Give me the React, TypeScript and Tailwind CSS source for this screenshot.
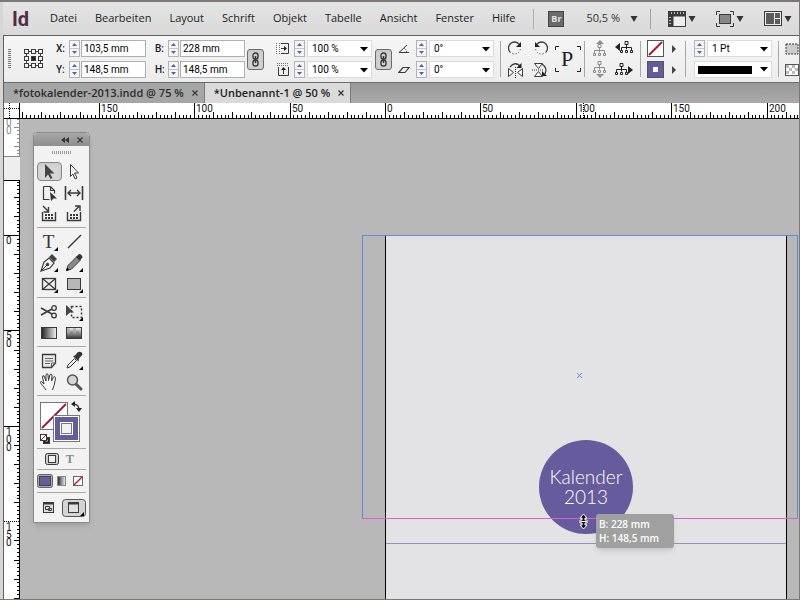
import { useEffect, useState, type ReactNode } from "react";
import clsx from "clsx";

const MENUS = [
  "Datei",
  "Bearbeiten",
  "Layout",
  "Schrift",
  "Objekt",
  "Tabelle",
  "Ansicht",
  "Fenster",
  "Hilfe",
];

const PX_PER_MM = 1.909;

// small shared pieces
function Icon({
  w,
  h,
  children,
}: {
  w: number;
  h: number;
  children: ReactNode;
}) {
  return (
    <svg
      width={w}
      height={h}
      viewBox={`0 0 ${w} ${h}`}
      fill="none"
      stroke="#3a3a3a"
      className="block shrink-0"
      aria-hidden="true"
    >
      {children}
    </svg>
  );
}

function Caret({ flat, className }: { flat?: boolean; className?: string }) {
  return (
    <svg
      width="8"
      height="6"
      viewBox="0 0 8 6"
      className={clsx("block shrink-0", className)}
      aria-hidden="true"
    >
      <path d={flat ? "M0 0h8L4 4.500z" : "M.5 0h7L4 6z"} fill="currentColor" />
    </svg>
  );
}

function Separator() {
  return <div className="h-9 w-px shrink-0 bg-[#a8a8a8]" />;
}

function Stepper({ label }: { label: string }) {
  return (
    <div className="flex h-[17px] w-[11px] shrink-0 flex-col border border-[#b4b4b4] bg-[#f6f6f6]">
      <button
        aria-label={`${label} erhöhen`}
        className="flex flex-1 items-center justify-center border-b border-[#c4c4c4]"
      >
        <Icon w={5} h={3}>
          <path d="M0 3L2.500 0L5 3z" fill="#5460ac" stroke="none" />
        </Icon>
      </button>
      <button
        aria-label={`${label} verringern`}
        className="flex flex-1 items-center justify-center"
      >
        <Icon w={5} h={3}>
          <path d="M0 0L2.500 3L5 0z" fill="#5460ac" stroke="none" />
        </Icon>
      </button>
    </div>
  );
}

function Field({ label, value }: { label: string; value: string }) {
  return (
    <div className="flex h-[17px] items-center">
      <label htmlFor={`field-${label}`} className="w-[13px] font-medium">
        {label}:
      </label>
      <Stepper label={label} />
      <input
        id={`field-${label}`}
        defaultValue={value}
        className="ml-px h-[17px] w-[65px] border border-[#b0b0b0] bg-white px-0.5 text-black"
      />
    </div>
  );
}

function ValueSelect({ label, value }: { label: string; value: string }) {
  return (
    <div className="relative h-[17px] w-[65px]">
      <select
        aria-label={label}
        className="h-[17px] w-full appearance-none border border-[#dcdcdc] bg-white px-1 text-black"
      >
        <option>{value}</option>
      </select>
      <Caret
        flat
        className="pointer-events-none absolute right-1 top-[7px] text-black"
      />
    </div>
  );
}

function SelectRow({
  icon,
  label,
  value,
}: {
  icon?: ReactNode;
  label: string;
  value: string;
}) {
  return (
    <div className="flex h-[17px] items-center">
      {icon && <div className="w-[18px]">{icon}</div>}
      <Stepper label={label} />
      <div className="w-0.5" />
      <ValueSelect label={label} value={value} />
    </div>
  );
}

function ChainButton({ label }: { label: string }) {
  return (
    <button
      aria-label={label}
      aria-pressed="true"
      className="flex h-[21px] w-[17px] shrink-0 items-center justify-center rounded-[3px] border border-[#6c6c6c] bg-[#d2d2d2] shadow-inner"
    >
      <Icon w={9} h={15}>
        <rect x="2" y="1" width="5" height="6" rx="2.2" strokeWidth="1.4" />
        <rect x="2" y="8" width="5" height="6" rx="2.2" strokeWidth="1.4" />
        <path d="M4.500 4v7" strokeWidth="1.6" />
      </Icon>
    </button>
  );
}

// menu bar
function MenuBar() {
  return (
    <header className="flex h-[34px] shrink-0 items-center overflow-hidden border-b border-[#606060] bg-linear-to-b from-[#e4e4e4] to-[#d9d9d9] pl-[9px] text-[11px] text-[#1c1c1c]">
      <div className="w-[38px] shrink-0 font-[Roboto,sans-serif] text-xl font-bold text-[#4f2d45]">
        Id
      </div>
      <nav className="flex shrink-0 gap-[18px]">
        {MENUS.map((menu) => (
          <button key={menu}>{menu}</button>
        ))}
      </nav>
      <div className="ml-[18px] h-5 w-px shrink-0 bg-[#b0b0b0]" />
      <button
        aria-label="Bridge"
        className="ml-3.5 flex h-4 w-4 shrink-0 items-center justify-center border border-[#444] bg-[#6a6a6a] text-[9px] font-bold text-[#e4e4e4]"
      >
        Br
      </button>
      <button className="ml-[22px] flex shrink-0 items-center gap-2.5 text-[#333]">
        50,5 % <Caret />
      </button>
      <div className="ml-3 h-5 w-px shrink-0 bg-[#a0a0a0]" />
      <div className="ml-[17px] flex shrink-0 gap-5 text-[#333]">
        <button
          aria-label="Anzeigeoptionen"
          className="flex items-center gap-0.5"
        >
          <Icon w={18} h={16}>
            <path d="M0 0h18v5H5v11H0z" fill="#3a3a3a" stroke="none" />
            <path d="M5 5h12.500v10.500H5z" fill="#eee" />
            <path
              d="M3.500 1v2M6.500 1v2M9.500 1v2M12.500 1v2M15.500 1v2M1 6.500h2M1 9.500h2M1 12.500h2"
              stroke="#bbb"
            />
          </Icon>
          <Caret />
        </button>
        <button
          aria-label="Bildschirmmodus"
          className="flex items-center gap-0.5"
        >
          <Icon w={18} h={16}>
            <path d="M.5 4V.5H4M14 .5h3.500V4M17.500 12v3.500H14M4 15.500H.5V12" />
            <rect x="3.500" y="3.500" width="11" height="9" fill="#888" />
          </Icon>
          <Caret />
        </button>
        <button
          aria-label="Dokumente anordnen"
          className="flex items-center gap-0.5"
        >
          <Icon w={18} h={15}>
            <rect x=".5" y=".5" width="17" height="14" fill="#eee" />
            <path
              d="M2 2h8v11H2zM11 2h5v5h-5zM11 8h5v5h-5z"
              fill="#5c5c5c"
              stroke="none"
            />
          </Icon>
          <Caret />
        </button>
      </div>
    </header>
  );
}

function ReferencePoint() {
  const cells = [0, 7, 14];
  return (
    <Icon w={20} h={20}>
      <path d="M2.500 2.500h14v14h-14z" />
      {cells.map((y) =>
        cells.map((x) => (
          <rect
            key={`${x}-${y}`}
            x={x + 0.5}
            y={y + 0.5}
            width="4"
            height="4"
            fill={x === 7 && y === 7 ? "#222" : "#f4f4f4"}
          />
        ))
      )}
    </Icon>
  );
}

// hierarchy glyph used by the select container / content buttons
function TreeIcon({
  arrow,
  muted,
}: {
  arrow: "up" | "down" | "left" | "right";
  muted?: boolean;
}) {
  const color = muted ? "#8e8e8e" : "#222";
  const arrows = {
    up: "M5 4L9 0l4 4z",
    down: "M5 13l4 4l4-4z",
    left: "M5 3v8L0 7z",
    right: "M13 5v8l5-4z",
  };
  const shift = { up: [2, 4], down: [2, 0], left: [5, 1], right: [0, 2] }[arrow];
  return (
    <Icon w={18} h={17}>
      <path d={arrows[arrow]} fill={color} stroke="none" />
      <g transform={`translate(${shift[0]} ${shift[1]})`} stroke={color}>
        <path d="M6.500 3.500v5M1.500 9V6.500h10V9" />
        <path d="M5 .5h3v3H5zM.5 9.500h2v2h-2zM5.500 9.500h2v2h-2zM10.500 9.500h2v2h-2z" />
      </g>
    </Icon>
  );
}

function IconButton({
  label,
  children,
}: {
  label: string;
  children: ReactNode;
}) {
  return (
    <button
      aria-label={label}
      className="flex h-[17px] items-center justify-center"
    >
      {children}
    </button>
  );
}

// control bar under the menus
function ControlBar() {
  const column = "flex shrink-0 flex-col gap-1";
  return (
    <section
      aria-label="Steuerung"
      className="flex h-[47px] shrink-0 items-center overflow-hidden border-b border-[#6c6c6c] bg-linear-to-b from-[#f6f6f6] to-[#ececec] pl-1 font-[Roboto,sans-serif] text-[10px] text-[#1c1c1c]"
    >
      <Icon w={4} h={20}>
        <path d="M1.500 0v20" stroke="#777" strokeWidth="3" strokeDasharray="1 1" />
      </Icon>
      <div className="ml-3 w-8 shrink-0">
        <ReferencePoint />
      </div>
      <div className={column}>
        <Field label="X" value="103,5 mm" />
        <Field label="Y" value="148,5 mm" />
      </div>
      <div className={clsx(column, "ml-[9px]")}>
        <Field label="B" value="228 mm" />
        <Field label="H" value="148,5 mm" />
      </div>
      <div className="w-0.5 shrink-0" />
      <ChainButton label="Proportionen beibehalten" />
      <div className={clsx(column, "ml-3")}>
        <SelectRow
          label="X-Skalierung"
          value="100 %"
          icon={
            <Icon w={14} h={13}>
              <path d="M.5 1v12M3.500 1v12" stroke="#777" strokeDasharray="1 1" />
              <path d="M5 1.500h7.500v10H5" />
              <path d="M5 6.500h4" />
              <path d="M8 4l3 2.500L8 9z" fill="#222" stroke="none" />
            </Icon>
          }
        />
        <SelectRow
          label="Y-Skalierung"
          value="100 %"
          icon={
            <Icon w={14} h={13}>
              <path d="M1 .5h12M1 2.500h12" stroke="#777" strokeDasharray="1 1" />
              <path d="M2.500 4v8.500h10V4" />
              <path d="M7.500 6v5" />
              <path d="M5 7l2.500-3L10 7z" fill="#222" stroke="none" />
            </Icon>
          }
        />
      </div>
      <div className="w-[3px] shrink-0" />
      <ChainButton label="Skalierung verketten" />
      <div className={clsx(column, "ml-1.5")}>
        <SelectRow
          label="Drehwinkel"
          value="0°"
          icon={
            <Icon w={12} h={10}>
              <path d="M9 1L1 8.500h10" />
              <path d="M6 4q2.500 1.500 2.500 4" strokeDasharray="1 1" />
            </Icon>
          }
        />
        <SelectRow
          label="Scherwinkel"
          value="0°"
          icon={
            <Icon w={12} h={8}>
              <path d="M.8 6.500L5 1.500h6L7 6.500z" strokeWidth="1.200" />
            </Icon>
          }
        />
      </div>
      <div className="w-1.5 shrink-0" />
      <Separator />
      <div className={clsx(column, "ml-1.5")}>
        <IconButton label="Um 90° drehen">
          <Icon w={17} h={16}>
            <path d="M3 11A6 6 0 0 1 12 3" strokeWidth="1.300" />
            <path d="M3 11A6 6 0 1 0 12 3" strokeDasharray="1 2" />
            <path d="M14 1v5H9z" fill="#222" stroke="none" />
          </Icon>
        </IconButton>
        <IconButton label="Horizontal spiegeln">
          <Icon w={17} h={16}>
            <path d="M1.500 6.500v8l5-4zM15.500 6.500v8l-5-4z" fill="#fff" />
            <path d="M8.500 5v11" strokeDasharray="1 1" />
            <path d="M3 5Q8-1 13 4" strokeWidth="1.300" />
            <path d="M14.500 1v5h-5z" fill="#222" stroke="none" />
          </Icon>
        </IconButton>
      </div>
      <div className={clsx(column, "ml-2")}>
        <IconButton label="Um 90° gegen den Uhrzeigersinn drehen">
          <Icon w={17} h={16}>
            <path d="M14 11A6 6 0 0 0 5 3" strokeWidth="1.300" />
            <path d="M14 11A6 6 0 1 1 5 3" strokeDasharray="1 2" />
            <path d="M3 1v5h5z" fill="#222" stroke="none" />
          </Icon>
        </IconButton>
        <IconButton label="Vertikal spiegeln">
          <Icon w={17} h={16}>
            <path d="M2.500 1.500h8l-4 5zM2.500 14.500h8l-4-5z" fill="#fff" />
            <path d="M0 8h12" strokeDasharray="1 1" />
            <path d="M10 2q6 4 3 10" strokeWidth="1.300" />
            <path d="M10 9v5h5z" fill="#222" stroke="none" />
          </Icon>
        </IconButton>
      </div>
      <div className="ml-1.5 flex h-[26px] w-[26px] shrink-0 items-center justify-center">
        <svg
          width="26"
          height="26"
          viewBox="0 0 26 26"
          fill="none"
          stroke="#222"
          role="img"
          aria-label="Zeichenformat"
        >
          <path d="M.5 4V.5H4M22 .5h3.500V4M25.500 22v3.500H22M4 25.500H.5V22" />
          <text
            x="12"
            y="20"
            textAnchor="middle"
            fontFamily="Liberation Serif, serif"
            fontSize="22"
            fill="#222"
            stroke="none"
          >
            P
          </text>
        </svg>
      </div>
      <div className="w-[3px] shrink-0" />
      <Separator />
      <div className={clsx(column, "ml-1.5")}>
        <IconButton label="Container auswählen">
          <TreeIcon arrow="up" muted />
        </IconButton>
        <IconButton label="Inhalt auswählen">
          <TreeIcon arrow="down" muted />
        </IconButton>
      </div>
      <div className={clsx(column, "ml-1.5")}>
        <IconButton label="Vorheriges Objekt">
          <TreeIcon arrow="left" />
        </IconButton>
        <IconButton label="Nächstes Objekt">
          <TreeIcon arrow="right" />
        </IconButton>
      </div>
      <div className="w-[7px] shrink-0" />
      <Separator />
      <div className={clsx(column, "ml-1.5")}>
        <IconButton label="Fläche">
          <Icon w={17} h={17}>
            <rect x=".5" y=".5" width="16" height="16" fill="#fff" stroke="#555" />
            <path d="M2 15L15 2" stroke="#a8163c" strokeWidth="2" />
          </Icon>
        </IconButton>
        <IconButton label="Kontur">
          <Icon w={17} h={17}>
            <rect x=".5" y=".5" width="16" height="16" fill="#665b9c" stroke="#555" />
            <rect x="6" y="6" width="5" height="5" fill="#fff" stroke="none" />
          </Icon>
        </IconButton>
      </div>
      <div className={clsx(column, "ml-2")}>
        {["Flächenfarbe", "Konturfarbe"].map((label) => (
          <IconButton key={label} label={label}>
            <Icon w={5} h={8}>
              <path d="M0 0v8l4-4z" fill="#444" stroke="none" />
            </Icon>
          </IconButton>
        ))}
      </div>
      <div className="w-2 shrink-0" />
      <Separator />
      <div className={clsx(column, "ml-2")}>
        <SelectRow label="Konturstärke" value="1 Pt" />
        <button
          aria-label="Konturart"
          className="flex h-[17px] w-full items-center justify-between border border-[#dcdcdc] bg-white px-[3px] text-black"
        >
          <span className="h-2 w-[54px] bg-black" />
          <Caret flat />
        </button>
      </div>
      <div className="w-1.5 shrink-0" />
      <Separator />
      <div className={clsx(column, "ml-1.5")}>
        <IconButton label="Eckenoptionen">
          <Icon w={14} h={12}>
            <rect
              x="1"
              y="1"
              width="12"
              height="10"
              fill="#ccc"
              strokeDasharray="2 1"
            />
          </Icon>
        </IconButton>
        <IconButton label="Deckkraft">
          <Icon w={14} h={12}>
            <rect x=".5" y=".5" width="13" height="11" fill="#fff" stroke="#555" />
            <path
              d="M1 1h3v3H1zM7 1h3v3H7zM4 4h3v3H4zM10 4h3v3h-3zM1 7h3v3H1zM7 7h3v3H7z"
              fill="#bbb"
              stroke="none"
            />
          </Icon>
        </IconButton>
      </div>
    </section>
  );
}

function DocumentTab({ title, active }: { title: string; active?: boolean }) {
  return (
    <div
      className={clsx(
        "flex shrink-0 items-center gap-2 border-r border-[#7c7c7c] pl-[9px] pr-1.5 font-semibold",
        active ? "bg-[#dadada] text-[#222]" : "bg-[#a6a6a6] text-[#2c2c2c]"
      )}
    >
      <button role="tab" aria-selected={!!active}>
        {title}
      </button>
      <button aria-label={`${title} schließen`}>
        <Icon w={6} h={6}>
          <path d="M.5 .5l5 5M5.500 .5l-5 5" strokeWidth="1.300" />
        </Icon>
      </button>
    </div>
  );
}

function useWindowSize() {
  const [size, setSize] = useState({
    width: window.innerWidth,
    height: window.innerHeight,
  });
  useEffect(() => {
    const update = () =>
      setSize({ width: window.innerWidth, height: window.innerHeight });
    window.addEventListener("resize", update);
    return () => window.removeEventListener("resize", update);
  }, []);
  return size;
}

// one tick every 2 mm, a longer one every 10 mm and a full one every 50 mm
function ticks(from: number, length: number, origin: number) {
  const result: { mm: number; pos: number }[] = [];
  for (let mm = from; origin + mm * PX_PER_MM < length; mm += 2) {
    result.push({ mm, pos: Math.round(origin + mm * PX_PER_MM) });
  }
  return result;
}

function HorizontalRuler() {
  const length = useWindowSize().width - 21;
  return (
    <svg
      height="16"
      className="block w-0 flex-1 bg-white"
      fontFamily="Roboto, sans-serif"
      fontSize="10"
    >
      <g fill="#000" shapeRendering="crispEdges">
        {ticks(-190, length, 365).map(({ mm, pos }) => {
          const h = mm % 50 === 0 ? 15 : mm % 10 === 0 ? 6 : 3;
          return <rect key={mm} x={pos} y={15 - h} width="1" height={h} />;
        })}
        <rect x="0" y="15" width="100%" height="1" />
      </g>
      <path d="M563.500 0v15" stroke="#000" strokeDasharray="1 1" />
      {ticks(-150, length - 20, 365)
        .filter(({ mm }) => mm % 50 === 0)
        .map(({ mm, pos }) => (
          <text key={mm} x={pos + 2} y="9" fill="#111">
            {Math.abs(mm)}
          </text>
        ))}
    </svg>
  );
}

// digits of a vertical label are stacked
function StackedLabel({
  text,
  y,
  fill,
}: {
  text: string;
  y: number;
  fill: string;
}) {
  return (
    <text y={y} fill={fill}>
      {text.split("").map((digit, i) => (
        <tspan key={i} x="2" dy={i === 0 ? 0 : 8}>
          {digit}
        </tspan>
      ))}
    </text>
  );
}

function VerticalRuler() {
  const length = useWindowSize().height - 120;
  return (
    <svg
      width="16"
      className="block shrink-0 self-stretch bg-white"
      fontFamily="Roboto, sans-serif"
      fontSize="10"
    >
      <g fill="#888" shapeRendering="crispEdges">
        {ticks(0, 36, 0).map(({ mm, pos }) => (
          <rect
            key={mm}
            x={mm === 4 || mm === 14 ? 10 : 13}
            y={pos}
            width={mm === 4 || mm === 14 ? 5 : 2}
            height="1"
          />
        ))}
        <rect x="15" y="0" width="1" height="37" />
        <rect x="0" y="37" width="16" height="25" fill="#eee" />
        <rect x="0" y="37" width="16" height="1" />
      </g>
      <StackedLabel text="00" y={7} fill="#888" />
      <g fill="#000" shapeRendering="crispEdges">
        <rect x="0" y="61" width="16" height="1" />
        <rect x="15" y="61" width="1" height="100%" />
        {ticks(-28, length, 116).map(({ mm, pos }) => {
          const w = mm % 50 === 0 ? 15 : mm % 10 === 0 ? 5 : 2;
          return mm === 150 ? null : (
            <rect key={mm} x={15 - w} y={pos} width={w} height="1" />
          );
        })}
      </g>
      <path d="M0 402.500h15" stroke="#000" strokeDasharray="1 1" />
      {ticks(0, length - 28, 116)
        .filter(({ mm }) => mm % 50 === 0)
        .map(({ mm, pos }) => (
          <StackedLabel key={mm} text={String(mm)} y={pos + 9} fill="#111" />
        ))}
    </svg>
  );
}

// toolbox
const corner = <path d="M19 15v4h-4z" fill="#000" stroke="none" />;

const TOOL_GROUPS: { label: string; art: ReactNode }[][] = [
  [
    {
      label: "Auswahl",
      art: (
        <path
          d="M6 2l9.500 9.500l-4.500 0l2.500 4.500l-2 1l-2.500-4.500L6 16z"
          fill="#444"
          stroke="none"
        />
      ),
    },
    {
      label: "Direktauswahl",
      art: <path d="M6.500 2.500l8 8.500h-4l2.500 5l-2 1l-2-5l-2.500 2.500z" fill="#fff" />,
    },
    {
      label: "Seite",
      art: (
        <>
          <path
            d="M4.500 3.500h7l4 4v3M4.500 3.500v13h6M11.500 3.500v4h4"
            strokeWidth="1.200"
          />
          <path d="M11 9l7 6.500h-3.500L12 18z" fill="#333" stroke="none" />
        </>
      ),
    },
    {
      label: "Lücke",
      art: (
        <>
          <path d="M1.500 3v14M18.500 3v14" strokeWidth="1.600" />
          <path
            d="M4 10h12M7 7L4 10l3 3M13 7l3 3l-3 3"
            strokeWidth="1.400"
          />
        </>
      ),
    },
    {
      label: "Inhaltsaufnahme",
      art: (
        <>
          <path d="M3.500 8v8.500h13V8" strokeWidth="1.400" />
          <path d="M6 11h8M6 14h8" strokeWidth="2" strokeDasharray="2 1" />
          <path d="M4 2l5 5M9.500 3v5h-5" strokeWidth="1.400" />
        </>
      ),
    },
    {
      label: "Inhaltsplatzierung",
      art: (
        <>
          <path d="M3.500 8v8.500h13V8" strokeWidth="1.400" />
          <path d="M6 11h8M6 14h8" strokeWidth="2" strokeDasharray="2 1" />
          <path d="M10 7.500l5-5M11 2h5v5" strokeWidth="1.400" />
        </>
      ),
    },
  ],
  [
    {
      label: "Text",
      art: (
        <>
          <text
            x="9.500"
            y="16"
            textAnchor="middle"
            fontFamily="Liberation Serif, serif"
            fontSize="19"
            fill="#333"
            stroke="none"
          >
            T
          </text>
          {corner}
        </>
      ),
    },
    {
      label: "Linienzeichner",
      art: <path d="M4 16L17 3" strokeWidth="1.500" />,
    },
    {
      label: "Zeichenstift",
      art: (
        <>
          <path d="M2 18l3-9l5-4l5 5l-4 5z" fill="#f4f4f4" strokeWidth="1.200" />
          <path d="M2 18l6-6" />
          <circle cx="8.500" cy="11.500" r="1.300" fill="#333" />
          <path d="M10 4l3-3l5 5l-3 3z" fill="#444" stroke="none" />
          {corner}
        </>
      ),
    },
    {
      label: "Buntstift",
      art: (
        <>
          <path d="M2.500 17.500l1.500-5l9-9l3.500 3.500l-9 9z" fill="#8a8a8a" />
          <path d="M2 18l1-3.500l2.500 2.500z" fill="#111" stroke="none" />
          <path d="M12 4l3-3q3 0 3.500 3.500l-3 3z" fill="#333" stroke="none" />
          {corner}
        </>
      ),
    },
    {
      label: "Rechteckrahmen",
      art: (
        <>
          <rect x="3.500" y="4.500" width="13" height="11" fill="#eee" strokeWidth="1.300" />
          <path d="M3.500 4.500l13 11M16.500 4.500l-13 11" strokeWidth="1.200" />
          {corner}
        </>
      ),
    },
    {
      label: "Rechteck",
      art: (
        <>
          <rect x="3.500" y="4.500" width="13" height="11" fill="#b8b8b8" />
          {corner}
        </>
      ),
    },
  ],
  [
    {
      label: "Schere",
      art: (
        <>
          <path d="M2 6l11 6M2 13l11-6" strokeWidth="1.600" />
          <circle cx="15" cy="6" r="2.300" strokeWidth="1.300" />
          <circle cx="15" cy="13.500" r="2.300" strokeWidth="1.300" />
        </>
      ),
    },
    {
      label: "Frei transformieren",
      art: (
        <>
          <path
            d="M7.500 4.500h10v11h-10z"
            strokeWidth="1.500"
            strokeDasharray="2 2"
          />
          <path d="M2 3l8 7.500H6L2 14z" fill="#444" stroke="none" />
          {corner}
        </>
      ),
    },
    {
      label: "Verlaufsfarbfeld",
      art: (
        <>
          <linearGradient id="grad-h">
            <stop stopColor="#222" />
            <stop offset="1" stopColor="#f4f4f4" />
          </linearGradient>
          <rect x="2.500" y="4.500" width="15" height="11" fill="url(#grad-h)" />
        </>
      ),
    },
    {
      label: "Weiche Verlaufskante",
      art: (
        <>
          <linearGradient id="grad-v" x2="0" y2="1">
            <stop stopColor="#444" stopOpacity="0" />
            <stop offset="1" stopColor="#333" />
          </linearGradient>
          <rect x="2.500" y="4.500" width="15" height="11" fill="#f0f0f0" />
          <path d="M3 5h3v3H3zM9 5h3v3H9zM6 8h3v3H6zM12 8h3v3h-3z" fill="#ccc" stroke="none" />
          <rect x="2.500" y="4.500" width="15" height="11" fill="url(#grad-v)" />
        </>
      ),
    },
  ],
  [
    {
      label: "Notiz",
      art: (
        <>
          <path d="M3.500 3.500h13v8.500l-4 4.500h-9z" fill="#e8e8e8" strokeWidth="1.300" />
          <path d="M6 7.500h8M6 10h8M6 12.500h5M12.500 16v-4h4" stroke="#666" />
        </>
      ),
    },
    {
      label: "Pipette",
      art: (
        <>
          <path d="M3 17l1-3l6.500-6.500l2 2L6 16z" fill="#eee" />
          <path d="M9 5l2-.5l3-3.500q4-1 4.500 2.500L15 7.500l-.5 3z" fill="#333" stroke="none" />
          {corner}
        </>
      ),
    },
    {
      label: "Hand",
      art: (
        <path
          d="M7 18q-1-2-3.500-4.500Q0 9.500 2.500 9.500L5 12L3.500 5q0-2 1.700-1L7 9V2.500q1-1.500 2 0l.5 6L11 2.500q1.500-1 2 .5L12.500 9l2-4q1.500-1 2 .5q-.5 5-1.500 8L13.500 18"
          fill="#f8f8f8"
        />
      ),
    },
    {
      label: "Zoom",
      art: (
        <>
          <path d="M12 12l5 5" strokeWidth="3" strokeLinecap="round" stroke="#555" />
          <circle cx="8.500" cy="8" r="5" fill="#d4d4d4" strokeWidth="1.500" stroke="#555" />
        </>
      ),
    },
  ],
];

function Toolbox() {
  return (
    <aside
      aria-label="Werkzeuge"
      className="absolute left-[13px] top-[13px] flex w-[57px] flex-col rounded-t border border-[#8a8a8a] bg-[#f2f2f2] shadow-md"
    >
      <div className="flex h-[13px] items-center justify-end gap-2 rounded-t bg-linear-to-b from-[#a8a8a8] to-[#8e8e8e] pr-1.5">
        <button aria-label="Reduzieren">
          <Icon w={8} h={6}>
            <path d="M4 0v6L0 3zM8 0v6L4 3z" fill="#333" stroke="none" />
          </Icon>
        </button>
        <button aria-label="Schließen">
          <Icon w={6} h={6}>
            <path d="M.5 .5l5 5M5.500 .5l-5 5" strokeWidth="1.300" />
          </Icon>
        </button>
      </div>
      <div className="flex h-3 items-end justify-center pb-1">
        <Icon w={20} h={3}>
          <path d="M0 1.500h20" stroke="#999" strokeWidth="3" strokeDasharray="1 1" />
        </Icon>
      </div>
      <div className="divide-y divide-[#a8a8a8] px-[3px]">
        {TOOL_GROUPS.map((group) => (
          <div key={group[0].label} className="grid grid-cols-2 py-[3px]">
            {group.map(({ label, art }) => (
              <button
                key={label}
                aria-label={label}
                className={clsx(
                  "flex items-center justify-center",
                  label === "Auswahl"
                    ? "my-px h-[19px] rounded border border-[#888] bg-[#d6d6d6] shadow-inner"
                    : "h-[21px]"
                )}
              >
                <Icon w={20} h={20}>
                  {art}
                </Icon>
              </button>
            ))}
          </div>
        ))}
        <button
          aria-label="Fläche und Kontur"
          className="flex h-[53px] w-full items-center"
        >
          <Icon w={46} h={46}>
            <rect x="3.500" y="3.500" width="27" height="27" fill="#fff" stroke="#777" />
            <path d="M5 29L29 5" stroke="#a8163c" strokeWidth="2" />
            <rect x="16.500" y="16.500" width="26" height="26" fill="#665b9c" stroke="#777" />
            <rect x="17.500" y="17.500" width="24" height="24" stroke="#fff" />
            <rect x="23.500" y="23.500" width="12" height="12" fill="#f2f2f2" stroke="#fff" />
            <rect x="24.500" y="24.500" width="10" height="10" stroke="#777" />
            <path d="M36 5q6 0 6 6" strokeWidth="1.300" />
            <path d="M38 2v6l-4-3zM39 9h6l-3 4z" fill="#222" stroke="none" />
            <rect x="6.500" y="38.500" width="6" height="6" fill="#222" />
            <rect x="8.500" y="40.500" width="2" height="2" fill="#fff" stroke="none" />
            <rect x="3.500" y="35.500" width="6" height="6" fill="#fff" />
            <path d="M4 41l5-5" stroke="#c00" />
          </Icon>
        </button>
        <div className="grid h-[21px] grid-cols-2 items-center justify-items-center">
          <button
            aria-label="Formatierung wirkt sich auf Rahmen aus"
            className="pl-1.5"
          >
            <Icon w={14} h={12}>
              <rect x=".5" y=".5" width="13" height="11" rx="2" fill="#ccc" />
              <rect x="3.500" y="2.500" width="7" height="7" fill="#eee" />
            </Icon>
          </button>
          <button
            aria-label="Formatierung wirkt sich auf Text aus"
            className="pr-2 font-['Liberation_Serif',serif] text-xs font-bold text-[#888]"
          >
            T
          </button>
        </div>
        <div className="flex h-[23px] items-center justify-between">
          <button aria-label="Farbe anwenden">
            <Icon w={16} h={14}>
              <rect x=".5" y=".5" width="15" height="13" rx="2" fill="#aaa" stroke="#666" />
              <rect x="2.500" y="2.500" width="11" height="9" fill="#665b9c" stroke="#444" />
            </Icon>
          </button>
          <button aria-label="Verlauf anwenden" className="pr-1">
            <Icon w={9} h={10}>
              <rect x=".5" y=".5" width="8" height="9" fill="url(#grad-h)" stroke="#888" />
            </Icon>
          </button>
          <button aria-label="Keine anwenden" className="pr-[3px]">
            <Icon w={10} h={10}>
              <rect x=".5" y=".5" width="9" height="9" fill="#fff" stroke="#666" />
              <path d="M1 9l8-8" stroke="#d01020" strokeWidth="1.500" />
            </Icon>
          </button>
        </div>
        <div className="flex h-[29px] items-center justify-end gap-2">
          <button aria-label="Normal">
            <Icon w={11} h={11}>
              <rect x=".5" y=".5" width="10" height="10" fill="#ddd" />
              <path d="M0 1.500h11" strokeWidth="2" />
              <path d="M2.500 4.500h4v3h-4zM5.500 6.500h3v2h-3z" />
            </Icon>
          </button>
          <button aria-label="Vorschau">
            <Icon w={24} h={18}>
              <rect x=".5" y=".5" width="23" height="17" rx="3" fill="#d4d4d4" stroke="#555" />
              <rect x="6.500" y="3.500" width="10" height="10" fill="#e0e0e0" />
              <path d="M6 4.500h11" strokeWidth="2" />
              <path d="M22 13v4h-4z" fill="#000" stroke="none" />
            </Icon>
          </button>
        </div>
      </div>
    </aside>
  );
}

// pasteboard with the page, everything on it is placed freely
function Pasteboard() {
  return (
    <main className="relative flex-1 overflow-hidden bg-[#b8b8b8]">
      <div className="absolute bottom-0 left-[365px] top-[117px] w-[402px] border-x border-black bg-[#e3e3e5]">
        <div className="absolute inset-x-0 top-[307px] h-px bg-[#9494c0]" />
      </div>
      <div className="absolute left-[519px] top-[321px] flex h-[94px] w-[94px] flex-col items-center justify-center rounded-full bg-[#665b9c] text-center font-[Lato,sans-serif] text-[19px] font-light leading-5 text-white">
        <p>Kalender</p>
        <p>2013</p>
      </div>
      <div className="absolute left-[342px] top-[116px] h-[284px] w-[436px] border border-b-[#e65ad8] border-l-[#5a8fd0] border-r-[#5a8fd0] border-t-[#5a8fd0]" />
      <svg
        className="absolute left-[556px] top-[253px]"
        width="7"
        height="7"
        viewBox="0 0 7 7"
        aria-hidden="true"
      >
        <path d="M1 1l5 5M6 1L1 6" stroke="#5a8fd0" />
      </svg>
      <svg
        className="absolute left-[558px] top-[394px]"
        width="11"
        height="17"
        viewBox="0 0 11 17"
        aria-hidden="true"
      >
        <path
          d="M5.500 1L9 5H7v2h2v3H7v2h2l-3.500 4L2 12h2v-2H2V7h2V5H2z"
          fill="#111"
          stroke="#fff"
        />
        <path d="M2.500 8.500h6" stroke="#fff" />
      </svg>
      <div className="absolute left-[576px] top-[395px] w-[78px] rounded-[3px] bg-[#a0a0a0] p-[3px] text-[10px] font-semibold leading-[14px] text-white shadow-md">
        <p>B: 228 mm</p>
        <p>H: 148,5 mm</p>
      </div>
      <Toolbox />
    </main>
  );
}

export default function App() {
  return (
    <div className="flex h-screen flex-col border-b border-r border-t-2 border-[#7c7878] bg-[#d8d6d4] pl-[3px] font-['Open_Sans',sans-serif]">
      <MenuBar />
      <div className="flex min-h-0 flex-1 flex-col border-l border-[#606060]">
        <ControlBar />
        <div
          role="tablist"
          className="flex h-5 shrink-0 overflow-hidden bg-linear-to-b from-[#999] to-[#aaa] text-[11px]"
        >
          <DocumentTab title="*fotokalender-2013.indd @ 75 %" />
          <DocumentTab title="*Unbenannt-1 @ 50 %" active />
        </div>
        <div className="flex shrink-0">
          <Icon w={16} h={16}>
            <rect width="16" height="16" fill="#fff" stroke="none" />
            <path d="M5.500 0v15M0 5.500h15" stroke="#000" strokeDasharray="1 1" />
            <path d="M15.500 0v16M0 15.500h16" stroke="#000" />
          </Icon>
          <HorizontalRuler />
        </div>
        <div className="flex min-h-0 flex-1">
          <VerticalRuler />
          <Pasteboard />
        </div>
      </div>
    </div>
  );
}
